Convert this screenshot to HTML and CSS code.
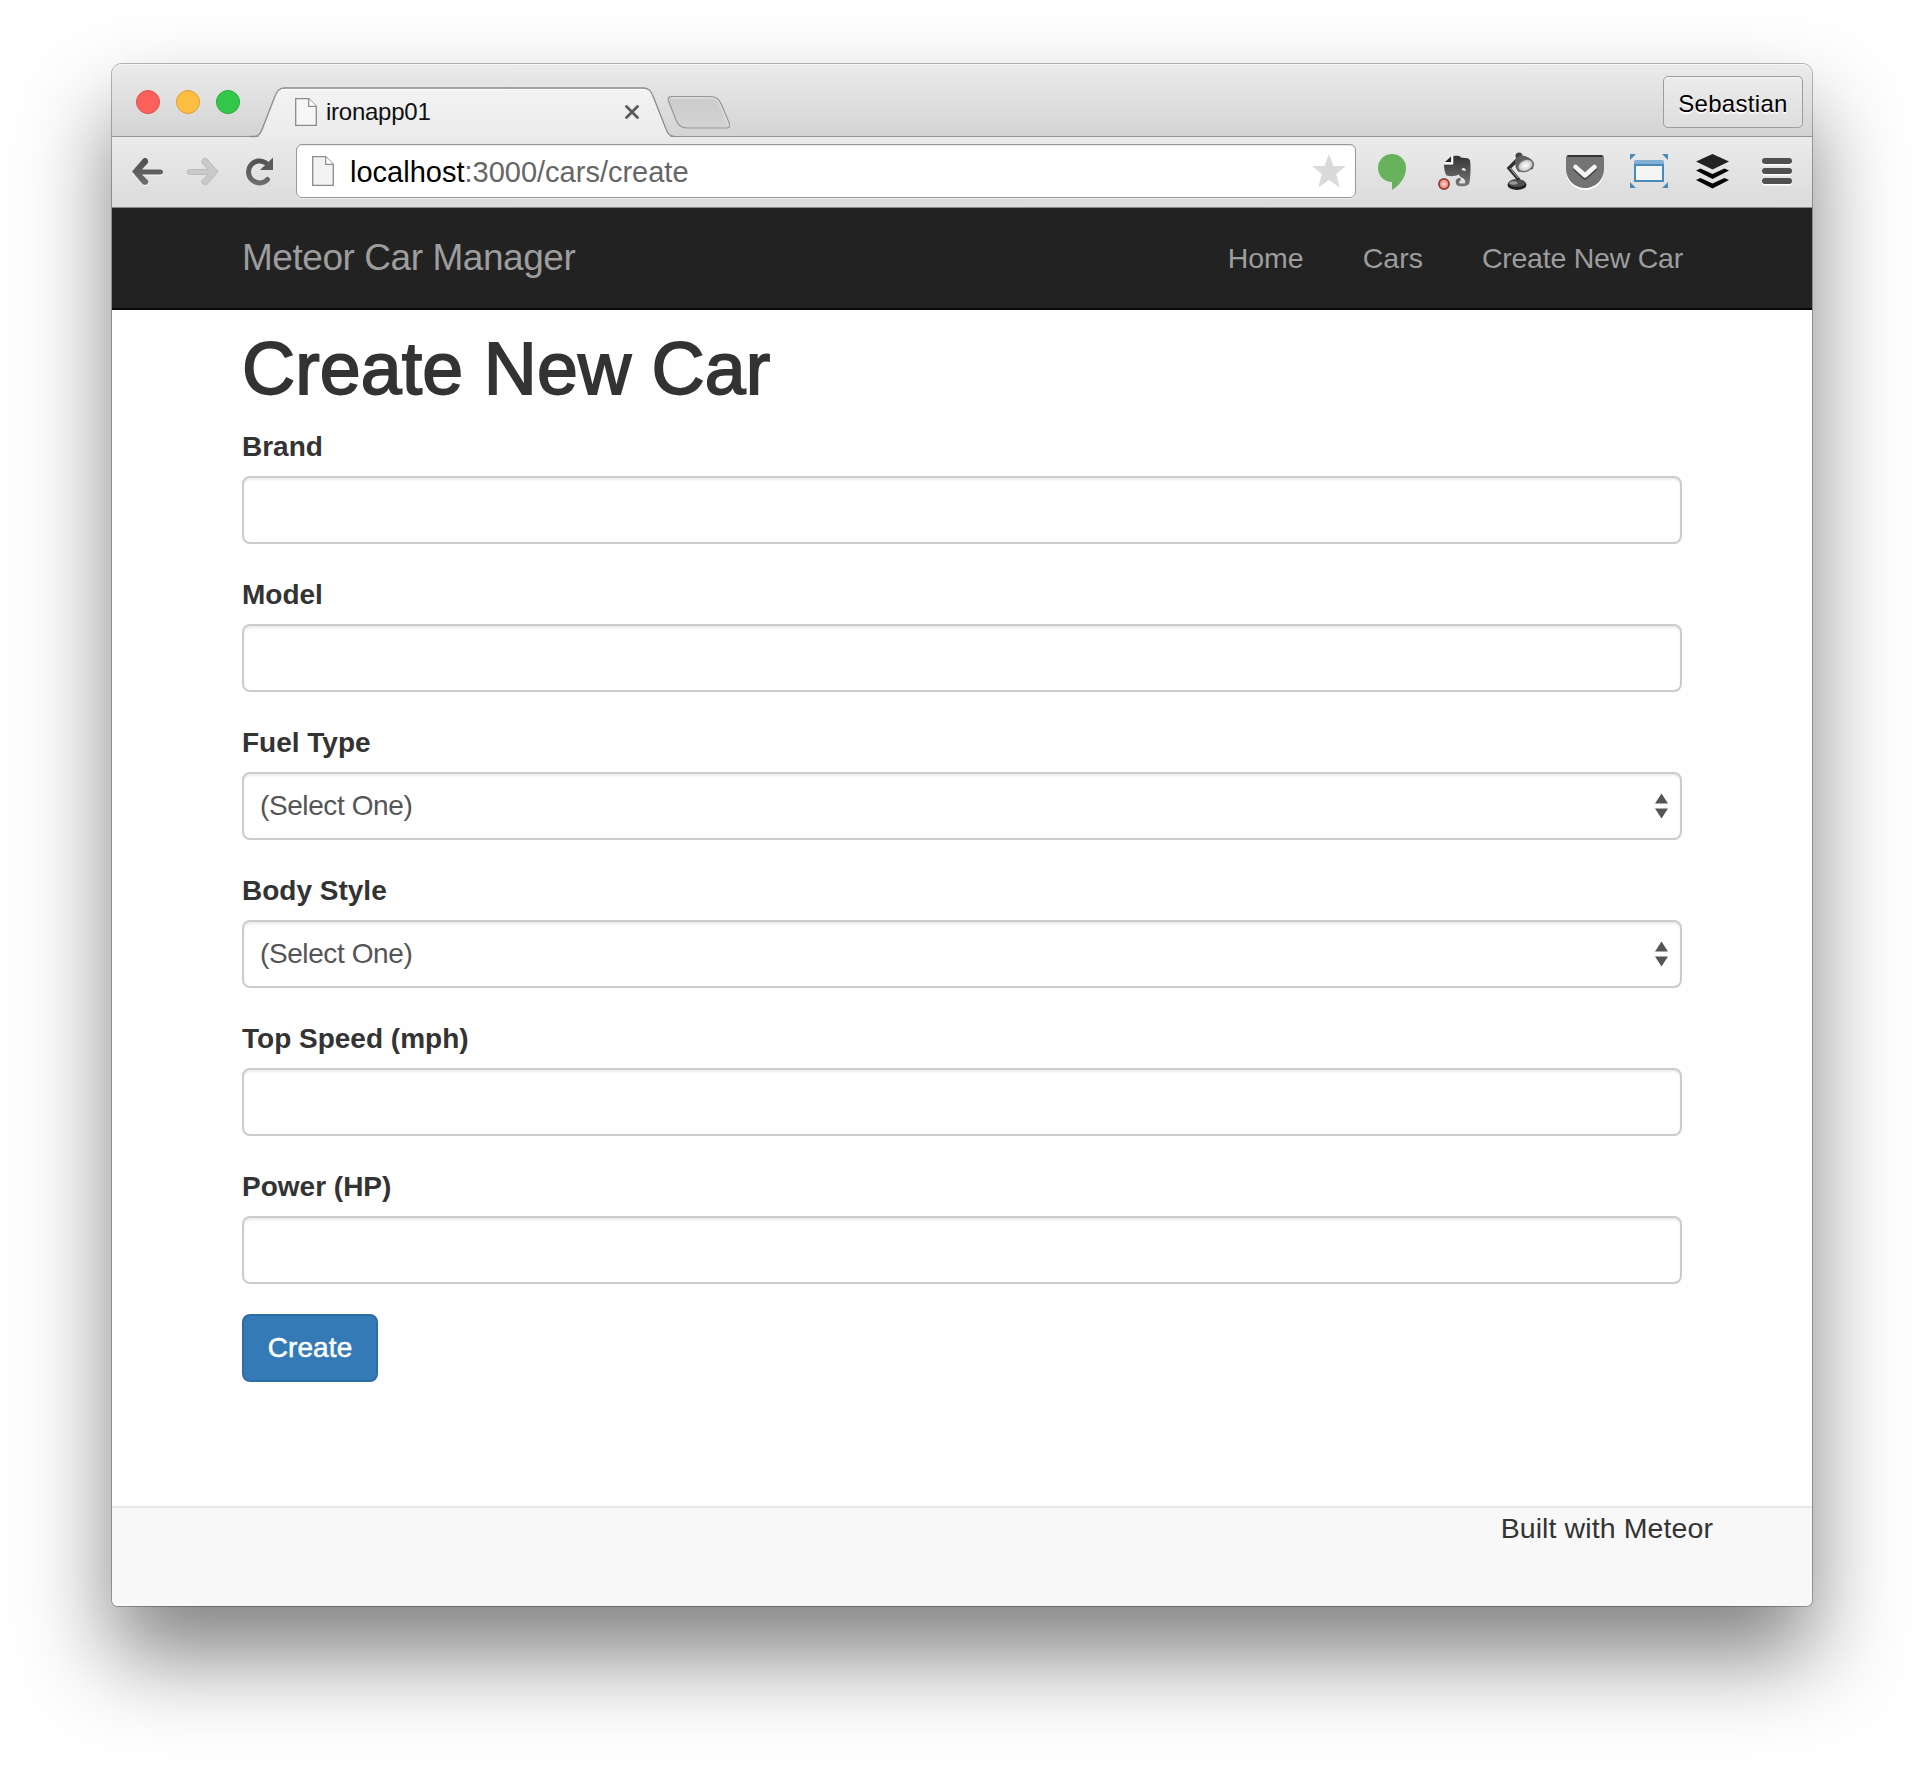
FILE: index.html
```html
<!DOCTYPE html>
<html lang="en">
<head>
<meta charset="utf-8">
<title>ironapp01</title>
<link rel="stylesheet" href="styles.css">
</head>
<body>
<div class="window">
  <header class="tabstrip">
    <div class="lights">
      <span class="light light-red"></span>
      <span class="light light-yellow"></span>
      <span class="light light-green"></span>
    </div>
    <div class="tab">
      <svg class="tab-shape" width="480" height="52" viewBox="0 0 480 52">
        <defs>
          <linearGradient id="tabFill" x1="0" y1="0" x2="0" y2="1"><stop offset="0" stop-color="#f3f3f3"/><stop offset="1" stop-color="#ebebeb"/></linearGradient>
          <linearGradient id="newFill" x1="0" y1="0" x2="0" y2="1"><stop offset="0" stop-color="#cbcbcb"/><stop offset="1" stop-color="#d3d3d3"/></linearGradient>
        </defs>
        <path d="M0 50.5h5c4 0 6-3 8-8L26 9c2-5 4-7.500 10-7.500H392c6 0 8 2.500 10 7.500l14 34c2 5 4 7.500 9 7.500V52H0z" fill="url(#tabFill)"/>
        <path d="M0 49.500h4c4 0 6-2 8-7L25 9c2-5 4-8 10-8H393c6 0 8 3 10 8l13 33c2 5 4 7.500 9 7.500" fill="none" stroke="#8e8e8e" stroke-width="1.300"/>
        <path d="M31 2.500H396" stroke="#fff" stroke-width="1"/>
        <path d="M422 9.500h37c7 0 10 2 12.500 8l8 19c1 3 0 4.500-3 4.500h-38c-7 0-10-2-12.500-8l-7.500-19c-1-3 0-4.500 3.500-4.500z" fill="url(#newFill)" stroke="#989898" stroke-width="1.200"/>
        <path d="M421 11h38c6 0 9 2 11 7l8 19" fill="none" stroke="#e6e6e6"/>
      </svg>
      <svg class="page-icon" width="22" height="28" viewBox="0 0 22 28"><path d="M.7.7h13l7.600 7.600v19H.7z" fill="#f6f6f7" stroke="#8b8b8b" stroke-width="1.300"/><path d="M13.700.7v7.600h7.600" fill="#fff" stroke="#8b8b8b" stroke-width="1.200"/></svg>
      <span class="tab-title">ironapp01</span>
      <svg class="tab-close" width="14" height="14" viewBox="0 0 14 14"><path d="M1.500 1.500l11 11M12.500 1.500l-11 11" stroke="#5b5b5b" stroke-width="2.800" stroke-linecap="round"/></svg>
    </div>
    <div class="profile">Sebastian</div>
  </header>

  <div class="toolbar">
    <svg class="nav-icons" width="146" height="34" viewBox="130 155 146 34">
      <defs><linearGradient id="glyph" gradientUnits="userSpaceOnUse" x1="0" y1="157" x2="0" y2="186"><stop offset="0" stop-color="#4e4e4e"/><stop offset="1" stop-color="#707070"/></linearGradient></defs>
      <g fill="none" stroke="#fff" stroke-opacity=".6" stroke-width="5.500" stroke-linecap="round" transform="translate(0 1.500)"><path d="M137 171.500H160M145.500 161L135.500 171.500L145.500 182"/></g>
      <path d="M132 171.500L142 160c3-4 7-1 6 3l-6 6.500h18c4 0 4 5 0 5h-18l6 6c1 4-3 6-6 3z" fill="url(#glyph)"/>
      <path d="M218 171.500L208 160c-3-4-7-1-6 3l6 6.500h-18c-4 0-4 5 0 5h18l-6 6c-1 4 3 6 6 3z" fill="#c9c9c9" stroke="#b5b5b5" stroke-width=".8"/>
      <path d="M267.500 179.500A11 11 0 1 1 266 163" fill="none" stroke="url(#glyph)" stroke-width="5" stroke-linecap="round"/>
      <path d="M273 157.500v12.500h-13z" fill="#5a5a5a"/>
    </svg>
    <div class="omnibox">
      <svg class="page-icon" width="22" height="30" viewBox="0 0 22 30"><path d="M.7.7h13l7.600 7.600v21H.7z" fill="#f3f3f4" stroke="#8b8b8b" stroke-width="1.300"/><path d="M13.700.7v7.600h7.600" fill="#fff" stroke="#8b8b8b" stroke-width="1.200"/></svg>
      <span class="url"><b class="host">localhost</b>:3000/cars/create</span>
      <svg class="star" width="34" height="34" viewBox="0 0 34 34"><path d="M17 0l4.500 12H34l-9.800 8 3.500 13.500L17 26 6.300 33.500 9.800 20 0 12h12.500z" fill="#dadada"/></svg>
    </div>
    <svg class="extensions" width="420" height="42" viewBox="1376 150 420 42">
      <defs>
        <linearGradient id="eg" x1="0" y1="0" x2="0" y2="1"><stop offset="0" stop-color="#333"/><stop offset="1" stop-color="#777"/></linearGradient>
        <linearGradient id="lamp" x1="0" y1="0" x2="1" y2="1"><stop offset="0" stop-color="#222"/><stop offset=".5" stop-color="#999"/><stop offset="1" stop-color="#333"/></linearGradient>
        <radialGradient id="bulb"><stop offset="0" stop-color="#fff"/><stop offset=".6" stop-color="#ddd"/><stop offset="1" stop-color="#aaa"/></radialGradient>
      </defs>
      <path d="M1392 154a14 14 0 0 1 14 14c0 9-6 17-14 22v-8a14 14 0 0 1 0-28z" fill="#68b15d"/>

      <path d="M1453 157c0-2 8-1.500 8 .5 3 .5 8 0 9 3 1 6 .5 16-.5 22-1 4-6 4-11 3.500-4-1-4-9 2-8v3c-2 0-2 2.500 0 2.500h4c2-1 0-5-2-5.500-3-1-3-3-4-3.500-3 2-8 2-12 1-2-3-2.500-8-2.500-11h9z" fill="url(#eg)"/>
      <path d="M1445 162l6-5.500v5.500z" fill="#222"/><path d="M1452.500 156.500v7h-8" fill="none" stroke="#fff" stroke-width="1.500"/>
      <path d="M1461.500 170c1-3 4-2.500 4.500 1z" fill="#eee"/>
      <circle cx="1444" cy="184" r="5" fill="#f8a090" stroke="#96433c" stroke-width="2"/><circle cx="1444" cy="184" r="1.600" fill="#ffe0d8"/>

      <ellipse cx="1517" cy="185" rx="9.500" ry="5" fill="#222"/><ellipse cx="1517" cy="183" rx="8.500" ry="4" fill="#505050"/><ellipse cx="1513.500" cy="183" rx="4" ry="1.700" fill="#999"/>
      <path d="M1519 180l-10-12 9-9" fill="none" stroke="#303030" stroke-width="3.500"/><path d="M1518 178l-8-10" stroke="#aaa" stroke-width="1"/>
      <circle cx="1519" cy="156" r="3.500" fill="#444"/><path d="M1515 162c0-8 15-9 19 2l-1 5-14 3c-3-2-4-6-4-10z" fill="#5f5f5f"/><ellipse cx="1525.500" cy="165.500" rx="8" ry="5.800" transform="rotate(-25 1525.500 165.500)" fill="url(#bulb)" stroke="#666" stroke-width="1.200"/>

      <path d="M1566 159c0-2 1-3 3-3h32c2 0 3 1 3 3v12c0 11-9 19-19 19s-19-8-19-19z" fill="#fff"/>
      <path d="M1566 158c0-2 1-3 3-3h32c2 0 3 1 3 3v11c0 11-9 19-19 19s-19-8-19-19z" fill="#747474"/><path d="M1567.500 156h35" stroke="#333" stroke-width="2"/>
      <path d="M1575.500 169l9.500 8.500 9.500-8.500" fill="none" stroke="#444" stroke-width="4.500" stroke-linecap="round" stroke-linejoin="round"/><path d="M1575.500 167l9.500 8.500 9.500-8.500" fill="none" stroke="#f5f5f5" stroke-width="4.500" stroke-linecap="round" stroke-linejoin="round"/>

      <path d="M1630 154h6l-6 6zM1668 154h-6l6 6zM1630 188h6l-6-6zM1668 188h-6l6-6z" fill="#468bb9"/>
      <path d="M1634 164v-2q0-2 2-2h26q2 0 2 2v2z" fill="#82aed3"/><path d="M1635 165h28v16h-28z" fill="#f5f5f5" stroke="#468bb9" stroke-width="2"/>

      <path d="M1700.500 178l-4.500 2 16.500 8.500 16.500-8.500-4.500-2-12 5.500z" fill="#050505"/>
      <path d="M1700.500 168.500l-4.500 2 16.500 8.500 16.500-8.500-4.500-2-12 5.500z" fill="#050505"/>
      <path d="M1712.500 154l16.500 7.500-16.500 8-16.500-8z" fill="#222"/>

      <g fill="#fff"><rect x="1762" y="159.500" width="30" height="6" rx="3"/><rect x="1762" y="169.500" width="30" height="6" rx="3"/><rect x="1762" y="179.500" width="30" height="6" rx="3"/></g>
      <g fill="#505050"><rect x="1762" y="158" width="30" height="6" rx="3"/><rect x="1762" y="168" width="30" height="6" rx="3"/><rect x="1762" y="178" width="30" height="6" rx="3"/></g>
    </svg>
  </div>

  <nav class="navbar">
    <a class="brand">Meteor Car Manager</a>
    <div class="links"><a>Home</a><a>Cars</a><a class="wide">Create New Car</a></div>
  </nav>

  <main class="content">
    <h1>Create New Car</h1>
    <form class="form">
      <div class="group"><label for="brand">Brand</label><input id="brand" class="control" type="text"></div>
      <div class="group"><label for="model">Model</label><input id="model" class="control" type="text"></div>
      <div class="group"><label for="fuel">Fuel Type</label>
        <div class="select"><select id="fuel" class="control"><option>(Select One)</option></select>
        <svg class="arrows" width="13" height="26" viewBox="0 0 13 26"><path d="M6.500.5L13 10.500H0zM6.500 25.500L13 15.500H0z" fill="#555"/></svg></div></div>
      <div class="group"><label for="body">Body Style</label>
        <div class="select"><select id="body" class="control"><option>(Select One)</option></select>
        <svg class="arrows" width="13" height="26" viewBox="0 0 13 26"><path d="M6.500.5L13 10.500H0zM6.500 25.500L13 15.500H0z" fill="#555"/></svg></div></div>
      <div class="group"><label for="speed">Top Speed (mph)</label><input id="speed" class="control" type="text"></div>
      <div class="group"><label for="power">Power (HP)</label><input id="power" class="control" type="text"></div>
      <button class="submit" type="button">Create</button>
    </form>
  </main>

  <footer class="footer">Built with Meteor</footer>
</div>
</body>
</html>
```
FILE: styles.css
```css
* { box-sizing: border-box; }

body {
  margin: 0;
  height: 1766px;
  overflow: hidden;
  padding: 64px 112px 0;
  background: #fefefe;
  font-family: "Liberation Sans", Arial, sans-serif;
  font-size: 28px;
  line-height: 40px;
  color: #333;
}

svg { display: block; flex: none; }

.window {
  width: 1700px;
  height: 1542px;
  display: flex;
  flex-direction: column;
  border-radius: 10px 10px 6px 6px;
  background: #fefefe;
  box-shadow: 0 0 0 1px rgba(0, 0, 0, .27), 0 50px 88px rgba(0, 0, 0, .49);
}

/* Tab strip */
.tabstrip {
  flex: none;
  height: 73px;
  display: flex;
  align-items: flex-start;
  padding: 0 9px 0 24px;
  border-bottom: 1px solid #939393;
  border-radius: 10px 10px 0 0;
  background: linear-gradient(#ebebeb, #d4d4d4);
  box-shadow: inset 0 1px 0 #f7f7f7;
}

.lights { display: flex; gap: 16px; padding-top: 26px; width: 122px; }
.light { width: 24px; height: 24px; border-radius: 50%; border: 1px solid; }
.light-red { background: #fc605b; border-color: #e1504b; }
.light-yellow { background: #fdbd40; border-color: #de9f35; }
.light-green { background: #34c84a; border-color: #26a934; }

.tab {
  position: relative;
  width: 392px;
  height: 50px;
  margin-top: 23px;
  padding: 11px 0 0 37px;
  display: flex;
  align-items: flex-start;
}
.tab-shape { position: absolute; left: -8px; top: 0; }
.tab .page-icon { position: relative; }
.tab-title {
  position: relative;
  flex: 1;
  margin-left: 9px;
  font-size: 24px;
  line-height: 28px;
  letter-spacing: -.25px;
  color: #111;
}
.tab-close { position: relative; margin: 7px 11px 0 0; }

.profile {
  width: 140px;
  height: 52px;
  margin: 12px 0 0 auto;
  padding-top: 2px;
  border: 1px solid #9d9d9d;
  border-radius: 5px;
  background: linear-gradient(#ececec, #dedede);
  box-shadow: inset 0 1px 0 #f5f5f5;
  color: #000;
  font-size: 24px;
  line-height: 50px;
  letter-spacing: .3px;
  text-align: center;
  text-shadow: 0 2px 1px #fff;
}

/* Toolbar */
.toolbar {
  flex: none;
  height: 71px;
  display: flex;
  align-items: flex-start;
  padding: 7px 16px 0 18px;
  border-bottom: 1px solid #8b8b8b;
  background: linear-gradient(#ebebeb, #dbdbdb);
}
.nav-icons { margin-top: 11px; }
.omnibox {
  width: 1060px;
  height: 54px;
  margin: 0 20px;
  padding: 0 9px 0 15px;
  display: flex;
  align-items: center;
  border: 1px solid #979797;
  border-radius: 6px;
  background: #fff;
  box-shadow: 0 1px 0 #f0f0f0, inset 0 1px 1px #e8e8e8;
}
.url { flex: 1; margin-left: 16px; padding-top: 2px; font-size: 29px; color: #666; }
.host { font-weight: 400; color: #000; }
.extensions { margin-top: 6px; }

/* Page navigation */
.navbar {
  flex: none;
  height: 102px;
  display: flex;
  justify-content: space-between;
  padding: 30px 129px 0 130px;
  border-bottom: 2px solid #080808;
  background: #222;
  color: #9d9d9d;
}
.brand { font-size: 37px; letter-spacing: -.45px; }
.links { display: flex; gap: 59px; font-size: 28.5px; }
.wide { letter-spacing: -.23px; }

/* Page content */
.content { flex: 1; padding: 20px 130px 0; }
h1 {
  margin: 0;
  height: 96px;
  font-size: 73.500px;
  line-height: 78px;
  font-weight: 400;
  letter-spacing: .1px;
  -webkit-text-stroke: 1.800px #333;
}
.group { display: flex; flex-direction: column; margin-bottom: 30px; }
label { height: 40px; margin-bottom: 10px; line-height: 41px; font-weight: 700; }
.control {
  display: block;
  width: 100%;
  height: 68px;
  margin: 0;
  padding: 12px 16px;
  border: 2px solid #ccc;
  border-radius: 8px;
  background: #fff;
  box-shadow: inset 0 2px 2px rgba(0, 0, 0, .075);
  font: inherit;
  letter-spacing: -.4px;
  color: #555;
  appearance: none;
}
.select { position: relative; }
.arrows { position: absolute; right: 14px; top: 21px; }
.submit {
  display: block;
  width: 136px;
  height: 68px;
  padding: 0;
  border: 2px solid #2e6da4;
  border-radius: 8px;
  background: #337ab7;
  font: inherit;
  letter-spacing: .1px;
  color: #fff;
  -webkit-text-stroke: .5px #fff;
}

.footer {
  flex: none;
  height: 100px;
  padding-right: 99px;
  border-top: 2px solid #e7e7e7;
  border-radius: 0 0 6px 6px;
  background: #f8f8f8;
  font-size: 28.500px;
  line-height: 40px;
  letter-spacing: .1px;
  text-align: right;
}
```
